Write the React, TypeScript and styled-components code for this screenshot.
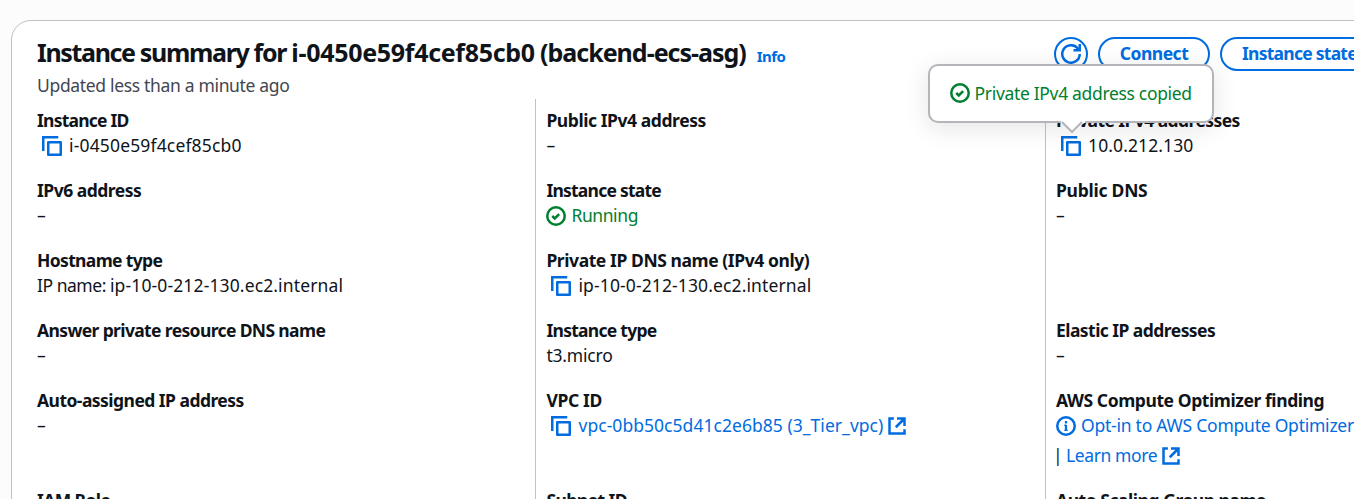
import React from "react";
import styled, { createGlobalStyle } from "styled-components";

const BLUE = "#006ce0";
const GREEN = "#00802f";
const INK = "#0f141a";

const GlobalStyle = createGlobalStyle`
  * { box-sizing: border-box; }
  html, body { margin: 0; background: #fcfcfd; }
  body {
    height: 499px;
    overflow: hidden;
    font: 400 17.5px/25px "Noto Sans", "Open Sans", sans-serif;
    color: ${INK};
  }
`;

const Page = styled.main`
  height: 499px;
  width: 1354px;
  padding: 20px 0 0 11px;
  overflow: hidden;
`;

const Panel = styled.section`
  width: 1540px;
  height: 700px;
  background: #fff;
  border: 1px solid #c0c0c6;
  border-radius: 20px;
  padding: 14px 25px 0;
`;

const Header = styled.header`
  display: flex;
  height: 64px;
`;

const Heading = styled.div`
  width: 1017px;
  flex: none;
`;

const TitleRow = styled.div`
  display: flex;
  align-items: baseline;
  gap: 11px;
  height: 35px;
  white-space: nowrap;
`;

const Title = styled.h2`
  margin: 0;
  font-size: 25px;
  line-height: 34px;
  font-weight: 700;
  letter-spacing: -1.34px;
`;

const Tracked = styled.span<{ $track: number }>`
  letter-spacing: ${(p) => p.$track}px;
`;

const InfoLink = styled.a`
  font-size: 15px;
  font-weight: 700;
  letter-spacing: -0.6px;
  color: ${BLUE};
`;

const Updated = styled.div`
  line-height: 30px;
  color: #424650;
  letter-spacing: -0.33px;
  white-space: nowrap;
`;

const Actions = styled.div`
  display: flex;
  gap: 10px;
  flex: none;
  padding-top: 2px;
`;

const Button = styled.button<{ $width: number; $track?: number; $icon?: boolean }>`
  display: flex;
  align-items: center;
  justify-content: center;
  width: ${(p) => p.$width}px;
  height: 34px;
  padding: 0 0 ${(p) => (p.$icon ? 0 : 2)}px;
  border: 2px solid ${BLUE};
  border-radius: 20px;
  background: #fff;
  color: ${BLUE};
  font: 700 17.5px/25px "Noto Sans", "Open Sans", sans-serif;
  letter-spacing: ${(p) => p.$track ?? -0.5}px;
  white-space: nowrap;
`;

const Columns = styled.div`
  display: grid;
  grid-template-columns: 498px 510px 510px;
  height: 600px;
`;

const Column = styled.div<{ $divided?: boolean }>`
  border-left: ${(p) => (p.$divided ? "1px solid #c0c0c6" : "none")};
  padding: 9px 0 0 ${(p) => (p.$divided ? "10px" : "0")};
`;

const MiddleColumn = styled(Column)`
  padding-left: 10.4px;
`;

const Cell = styled.div<{ $tall?: boolean }>`
  height: ${(p) => (p.$tall ? 100 : 70)}px;
  white-space: nowrap;
`;

const Label = styled.div<{ $track?: number }>`
  font-weight: 700;
  letter-spacing: ${(p) => p.$track ?? -0.5}px;
`;

const Value = styled.div<{ $color?: string; $track?: number }>`
  display: flex;
  align-items: center;
  gap: 5px;
  height: 25px;
  color: ${(p) => p.$color ?? INK};
  letter-spacing: ${(p) => p.$track ?? -0.4}px;

  svg { flex: none; }
`;

const CopyValue = styled(Value)`
  gap: 7.5px;
  padding-left: 4.6px;
`;

const LearnMore = styled(Value)`
  gap: 5px;
  height: 35px;
`;

const Link = styled.a`
  color: ${BLUE};
`;

const ExternalLink = styled.a`
  display: flex;
  align-items: center;
  gap: 4px;
  color: ${BLUE};
`;

const Separator = styled.span`
  width: 9px;
  margin: 0 -1px 0 -3px;
`;

const Anchor = styled.div`
  position: relative;
  width: 20px;
  height: 20px;
`;

const Popover = styled.div`
  position: absolute;
  left: -133px;
  top: -72px;
  width: 286px;
  height: 59px;
  display: flex;
  align-items: center;
  gap: 5px;
  padding-left: 20px;
  border: 2px solid #b4b4bb;
  border-radius: 10px;
  background: #fff;
  box-shadow: 0 5px 25px 1px rgba(0, 7, 22, 0.1);
  color: ${GREEN};
  letter-spacing: -0.33px;
`;

const Arrow = styled.svg`
  position: absolute;
  left: 131px;
  top: 55px;
`;

const Icon = ({ children }: { children: React.ReactNode }) => (
  <svg width="20" height="20" viewBox="0 0 16 16" fill="none" stroke="currentColor" strokeWidth="2" display="block">
    {children}
  </svg>
);

const CopyIcon = () => (
  <Icon>
    <path d="M1 12V1h12" stroke={BLUE} />
    <path d="M5 5h10v10H5z" stroke={BLUE} strokeLinejoin="round" />
  </Icon>
);

const SuccessIcon = () => (
  <Icon>
    <circle cx="8" cy="8" r="7" />
    <path d="m5 8 2 2 3.52-3.52" />
  </Icon>
);

const InfoIcon = () => (
  <Icon>
    <circle cx="8" cy="8" r="7" />
    <path d="M8 11.5V7M8 6V4" strokeWidth="1.8" />
    <path d="M6.4 7.4H8M6.4 11.4h3.2" strokeWidth="0.8" />
  </Icon>
);

const ExternalIcon = () => (
  <Icon>
    <path d="M5.5 2H2v12h12v-3.5" />
    <path d="M8 2h6v6M14 2 7 9" />
  </Icon>
);

const RefreshIcon = () => (
  <Icon>
    <path d="M15 8a7 7 0 1 1-1.5-4.35L14.6 5" />
    <path d="M10 5h5V0" />
  </Icon>
);

type FieldProps = {
  label: string;
  track?: number;
  valueTrack?: number;
  tall?: boolean;
  children?: React.ReactNode;
};

const Field = ({ label, track, valueTrack, tall, children = "–" }: FieldProps) => (
  <Cell $tall={tall}>
    <Label $track={track}>{label}</Label>
    {typeof children === "string" ? <Value $track={valueTrack}>{children}</Value> : children}
  </Cell>
);

export default function App() {
  return (
    <Page>
      <GlobalStyle />
      <Panel>
        <Header>
          <Heading>
            <TitleRow>
              <Title>
                Instance summary for <Tracked $track={-0.3}>i-0450e59f4cef85cb0</Tracked>{" "}
                <Tracked $track={-1}>(backend-ecs-asg)</Tracked>
              </Title>
              <InfoLink>Info</InfoLink>
            </TitleRow>
            <Updated>Updated less than a minute ago</Updated>
          </Heading>
          <Actions>
            <Button $width={34} $icon aria-label="Refresh"><RefreshIcon /></Button>
            <Button $width={112}>Connect</Button>
            <Button $width={159} $track={-0.75}>Instance state</Button>
          </Actions>
        </Header>
        <Columns>
          <Column>
            <Field label="Instance ID" track={-0.77}>
              <CopyValue $track={0.15}><CopyIcon /><span>i-0450e59f4cef85cb0</span></CopyValue>
            </Field>
            <Field label="IPv6 address" />
            <Field label="Hostname type" track={-0.65}>
              <Value as="div">
                <span>
                  <Tracked $track={-0.47}>IP name: </Tracked>
                  <Tracked $track={0.13}>ip-10-0-212-130.ec2.internal</Tracked>
                </span>
              </Value>
            </Field>
            <Field label="Answer private resource DNS name" track={-0.63} />
            <Field label="Auto-assigned IP address" track={-0.54} tall />
            <Field label="IAM Role" track={-0.6} />
          </Column>
          <MiddleColumn $divided>
            <Field label="Public IPv4 address" track={-0.43} />
            <Field label="Instance state" track={-0.77}>
              <Value $color={GREEN}><SuccessIcon /><span>Running</span></Value>
            </Field>
            <Field label="Private IP DNS name (IPv4 only)" track={-0.42}>
              <CopyValue $track={0.12}><CopyIcon /><span>ip-10-0-212-130.ec2.internal</span></CopyValue>
            </Field>
            <Field label="Instance type" track={-0.72} valueTrack={-0.2}>t3.micro</Field>
            <Field label="VPC ID" track={-0.35} tall>
              <CopyValue $color={BLUE} $track={0.04}>
                <CopyIcon />
                <ExternalLink>vpc-0bb50c5d41c2e6b85 (3_Tier_vpc)<ExternalIcon /></ExternalLink>
              </CopyValue>
            </Field>
            <Field label="Subnet ID" track={-0.55} />
          </MiddleColumn>
          <Column $divided>
            <Field label="Private IPv4 addresses" track={-0.58}>
              <CopyValue $track={0.1}>
                <Anchor>
                  <CopyIcon />
                  <Popover>
                    <SuccessIcon />
                    <span>Private IPv4 address copied</span>
                    <Arrow width="24" height="13" viewBox="0 0 24 13">
                      <path d="M0 0h24v2h-1L12 12 1 2H0z" fill="#fff" />
                      <path d="M1 1l10 10 10-10" fill="none" stroke="#b4b4bb" strokeWidth="2" />
                    </Arrow>
                  </Popover>
                </Anchor>
                <span>10.0.212.130</span>
              </CopyValue>
            </Field>
            <Field label="Public DNS" track={-0.25} />
            <Cell />
            <Field label="Elastic IP addresses" track={-0.55} />
            <Field label="AWS Compute Optimizer finding" track={-0.42} tall>
              <Value $color={BLUE} $track={-0.24}><InfoIcon /><Link>Opt-in to AWS Compute Optimizer</Link></Value>
              <LearnMore>
                <Separator>|</Separator>
                <ExternalLink>Learn more<ExternalIcon /></ExternalLink>
              </LearnMore>
            </Field>
            <Field label="Auto Scaling Group name" track={-0.46} />
          </Column>
        </Columns>
      </Panel>
    </Page>
  );
}
